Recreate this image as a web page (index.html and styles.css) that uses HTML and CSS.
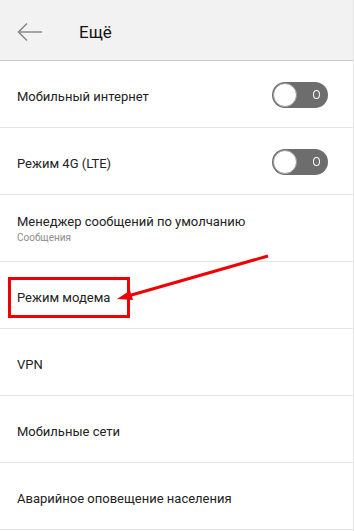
FILE: index.html
```html
<!DOCTYPE html>
<html lang="ru">
<head>
<meta charset="utf-8">
<link rel="stylesheet" href="styles.css">
</head>
<body>
<div class="screen">
  <header class="topbar">
    <svg class="back" width="26" height="20" viewBox="0 0 26 20"><path d="M25 10H2M10 1.5L1.5 10L10 18.5" fill="none" stroke="#8a8a8a" stroke-width="1.6"/></svg>
    <span class="title">Ещё</span>
  </header>
  <div class="list">
    <div class="row">
      <span class="label">Мобильный интернет</span>
      <span class="toggle"><span class="knob"></span><span class="ring"></span></span>
    </div>
    <div class="row">
      <span class="label">Режим 4G (LTE)</span>
      <span class="toggle"><span class="knob"></span><span class="ring"></span></span>
    </div>
    <div class="row">
      <div class="stack">
        <span class="label">Менеджер сообщений по умолчанию</span>
        <span class="sub">Сообщения</span>
      </div>
    </div>
    <div class="row highlight">
      <span class="label">Режим модема</span>
      <span class="redbox"></span>
    </div>
    <div class="row"><span class="label">VPN</span></div>
    <div class="row"><span class="label">Мобильные сети</span></div>
    <div class="row"><span class="label">Аварийное оповещение населения</span></div>
  </div>
  <svg class="pointer" width="354" height="531" viewBox="0 0 354 531">
    <line x1="268" y1="256" x2="128" y2="296" stroke="#f00000" stroke-width="3"/>
    <polygon points="117,299 130,290.5 133,300" fill="#f00000"/>
  </svg>
</div>
</body>
</html>
```
FILE: styles.css
```css
html, body {
  margin: 0;
  padding: 0;
  background: #fff;
}
.screen {
  position: relative;
  width: 353px;
  height: 531px;
  border-right: 1px solid #e6e6e6;
  overflow: hidden;
  font-family: Roboto, "Noto Sans", sans-serif;
}
.topbar {
  height: 60px;
  background: #f2f2f2;
  border-bottom: 1px solid #c9c9c9;
  display: flex;
  align-items: center;
  padding-left: 17px;
  box-sizing: content-box;
}
.back {
  display: block;
  margin-top: 3px;
}
.title {
  margin-left: 36px;
  font-size: 17px;
  color: #141414;
  margin-top: 3px;
}
.row {
  position: relative;
  height: 66px;
  border-bottom: 1px solid #e4e4e4;
  display: flex;
  align-items: center;
  justify-content: space-between;
  padding: 0 25px 0 17px;
}
.label {
  font-size: 13px;
  color: #222;
  margin-top: 4px;
}
.stack {
  display: flex;
  flex-direction: column;
}
.stack .label {
  margin-top: 0;
}
.sub {
  font-size: 10px;
  color: #8c8c8c;
  margin-top: 3px;
}
.toggle {
  position: relative;
  width: 56px;
  height: 26px;
  border-radius: 13px;
  background: #6d6d6d;
  display: flex;
  align-items: center;
  justify-content: space-between;
  box-sizing: border-box;
  padding: 0 8px 0 1px;
  margin-top: 1px;
}
.knob {
  width: 22px;
  height: 22px;
  border-radius: 50%;
  background: #fff;
  border: 1px solid #9a9a9a;
}
.ring {
  width: 5px;
  height: 7px;
  border: 1.5px solid #fff;
  border-radius: 50%;
}
.redbox {
  position: absolute;
  left: 8px;
  top: 15px;
  width: 116px;
  height: 35px;
  border: 3px solid #f00000;
}
.pointer {
  position: absolute;
  left: 0;
  top: 0;
  pointer-events: none;
}
```
